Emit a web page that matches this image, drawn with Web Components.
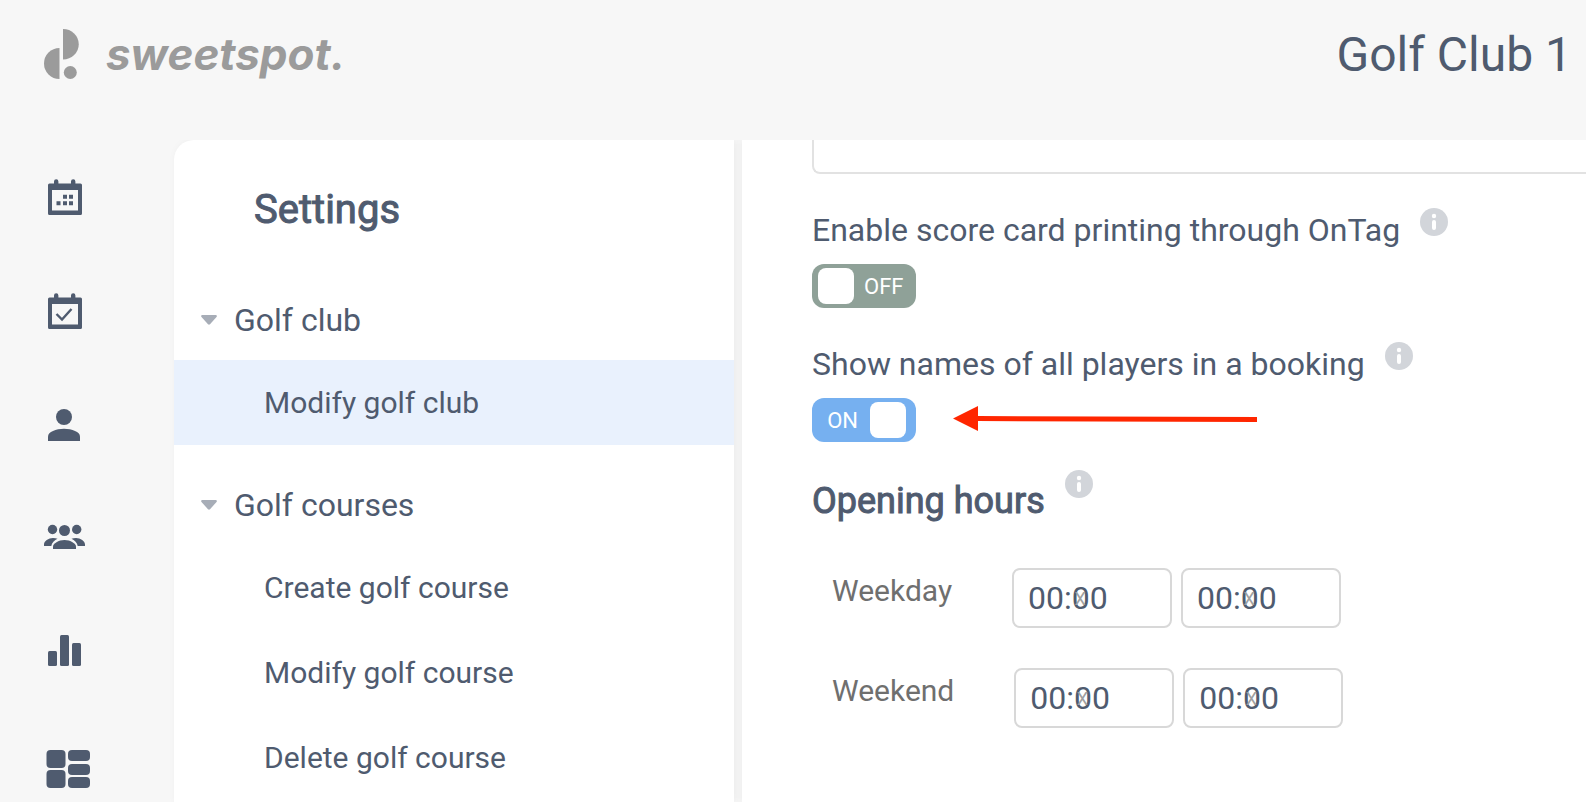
<!DOCTYPE html>
<html lang="en">
<head>
<meta charset="utf-8">
<meta name="viewport" content="width=device-width, initial-scale=1">
<title>Sweetspot - Settings</title>
<style>
    html, body { height: 100%; }
    body {
        margin: 0;
        overflow: hidden;
        background: #f7f7f7;
        color: #4f5b6f;
        font-family: Roboto, "Liberation Sans", sans-serif;
        font-size: 32px;
    }
</style>
</head>
<body>

<app-shell>
    <app-header slot="header" club="Golf Club 1"></app-header>
    <icon-rail slot="rail"></icon-rail>

    <settings-menu slot="menu" heading="Settings">
        <menu-group label="Golf club">
            <menu-item active>Modify golf club</menu-item>
        </menu-group>
        <menu-group label="Golf courses">
            <menu-item>Create golf course</menu-item>
            <menu-item>Modify golf course</menu-item>
            <menu-item>Delete golf course</menu-item>
        </menu-group>
    </settings-menu>

    <club-form>
        <toggle-field label="Enable score card printing through OnTag"></toggle-field>
        <toggle-field label="Show names of all players in a booking" checked>
            <pointer-arrow></pointer-arrow>
        </toggle-field>
        <opening-hours heading="Opening hours">
            <hours-row day="Weekday" from="00:00" to="00:00"></hours-row>
            <hours-row day="Weekend" from="00:00" to="00:00"></hours-row>
        </opening-hours>
    </club-form>
</app-shell>

<script>
    // shared helper, every element renders once into an open root
    function render(element, html) {
        element.attachShadow({mode: 'open'}).innerHTML = html;
    }

    class AppShell extends HTMLElement {
        connectedCallback() {
            render(this, `
                <style>
                    :host {
                        display: grid;
                        grid-template-columns: 174px 1fr;
                        grid-template-rows: 140px minmax(0, 1fr);
                        height: 100vh;
                    }
                    slot[name="header"] {
                        display: block;
                        grid-column: 1 / -1;
                        position: relative;
                        z-index: 1;
                        background: #f7f7f7;
                    }
                    .workspace {
                        display: grid;
                        grid-template-columns: 560px minmax(0, 1fr);
                        gap: 8px;
                        min-height: 0;
                    }
                </style>
                <slot name="header"></slot>
                <slot name="rail"></slot>
                <div class="workspace">
                    <slot name="menu"></slot>
                    <slot></slot>
                </div>
            `);
        }
    }

    class AppHeader extends HTMLElement {
        connectedCallback() {
            render(this, `
                <style>
                    :host {
                        display: flex;
                        justify-content: space-between;
                        align-items: flex-start;
                        padding: 27px 14px 0 44px;
                    }
                    a {
                        display: flex;
                        gap: 26px;
                        color: #9b9b9b;
                        text-decoration: none;
                        font: italic 700 44px/54px Inter, sans-serif;
                    }
                    .club { font-size: 48px; line-height: 56px; }
                </style>
                <a href="#">
                    <svg width="36" height="56" viewBox="0 0 36 56" fill="currentColor" aria-hidden="true">
                        <path d="M19 2a15.500 15 0 0 1 0 30.500z"/>
                        <path d="M15.500 21v31a15.500 15.500 0 0 1 0-31z"/>
                        <circle cx="26.300" cy="45.500" r="6.500"/>
                    </svg>
                    <span>sweetspot.</span>
                </a>
                <div class="club">${this.getAttribute('club')}</div>
            `);
        }
    }

    class IconRail extends HTMLElement {
        connectedCallback() {
            const calendar = `
                <path fill-rule="evenodd" d="M5.500 6.500h31a1.500 1.500 0 0 1 1.500 1.500v28.500a1.500 1.500 0 0 1-1.500 1.500h-31a1.500 1.500 0 0 1-1.500-1.500v-28.500a1.500 1.500 0 0 1 1.500-1.500zM8 13v20.500h26v-20.500z"/>
                <path d="M10 8v-3.500a2.200 2.200 0 0 1 4.400 0v3.500zM27 8v-3.500a2.200 2.200 0 0 1 4.400 0v3.500z"/>
            `;
            const icons = {
                'Calendar': calendar + `
                    <path d="M19 17.800h4v4h-4zM25 17.800h4v4h-4zM12.500 24.300h4v4h-4zM19 24.300h4v4h-4zM25 24.300h4v4h-4z"/>
                `,
                'Bookings': calendar + `
                    <path d="M12.500 23l5.500 5.500 9.500-10.500" fill="none" stroke="currentColor" stroke-width="2.400"/>
                `,
                'Player': `
                    <circle cx="20" cy="12" r="8"/>
                    <path d="M4 36v-4.500c0-4.500 8-7.700 16-7.700s16 3.200 16 7.700v4.500z"/>
                `,
                'Members': `
                    <circle cx="8.500" cy="10.500" r="4.700"/>
                    <circle cx="32.700" cy="10.500" r="4.700"/>
                    <circle cx="20.500" cy="11.500" r="5.500"/>
                    <path d="M9 30v-2.500c0-3 5.500-6.500 11.500-6.500s11.500 3.500 11.500 6.500v2.500z"/>
                    <path d="M0 27v-1.500c0-3.500 4.500-6.500 9-6.500 1.700 0 3.200.3 4.500.8-3 1.500-5.800 4-6.200 7.200z"/>
                    <path d="M41 27v-1.500c0-3.500-4.500-6.500-9-6.500-1.700 0-3.200.3-4.500.8 3 1.500 5.800 4 6.200 7.200z"/>
                `,
                'Statistics': `
                    <rect x="4" y="18" width="9" height="15" rx="1.500"/>
                    <rect x="16" y="2" width="9" height="31" rx="1.500"/>
                    <rect x="28" y="10" width="9" height="23" rx="1.500"/>
                `,
                'Overview': `
                    <rect x="2.500" y="3" width="19" height="18" rx="4"/>
                    <rect x="2.500" y="23" width="19" height="18" rx="4"/>
                    <rect x="24" y="3" width="22" height="11" rx="4"/>
                    <rect x="24" y="17" width="22" height="11" rx="4"/>
                    <rect x="24" y="30" width="22" height="11" rx="4"/>
                `
            };

            render(this, `
                <style>
                    :host { display: block; }
                    nav {
                        display: flex;
                        flex-direction: column;
                        align-items: flex-start;
                        gap: 70px;
                        padding: 37px 0 0 44px;
                    }
                    a, svg { display: block; color: inherit; }
                </style>
                <nav aria-label="Main">
                    ${Object.keys(icons).map(name => `
                        <a href="#" aria-label="${name}">
                            <svg width="48" height="44" viewBox="0 0 48 44" fill="currentColor">${icons[name]}</svg>
                        </a>
                    `).join('')}
                </nav>
            `);
        }
    }

    class SettingsMenu extends HTMLElement {
        connectedCallback() {
            render(this, `
                <style>
                    :host {
                        display: block;
                        background: white;
                        border-top-left-radius: 20px;
                        box-shadow: 2px 0 8px rgba(0, 0, 0, .05);
                    }
                    h1 {
                        margin: 0;
                        padding: 46px 80px;
                        font-size: 40px;
                        line-height: 48px;
                        font-weight: 400;
                        -webkit-text-stroke: 1px currentColor;
                    }
                    nav { display: flex; flex-direction: column; gap: 20px; }
                </style>
                <h1>${this.getAttribute('heading')}</h1>
                <nav aria-label="Settings"><slot></slot></nav>
            `);
        }
    }

    class MenuGroup extends HTMLElement {
        connectedCallback() {
            render(this, `
                <style>
                    :host { display: block; }
                    button {
                        display: flex;
                        align-items: center;
                        gap: 17px;
                        width: 100%;
                        height: 80px;
                        padding: 0 27px;
                        border: 0;
                        background: none;
                        color: inherit;
                        font: inherit;
                    }
                    svg { fill: #a7adb7; }
                </style>
                <button type="button" aria-expanded="true">
                    <svg width="16" height="10" viewBox="0 0 16 10" aria-hidden="true">
                        <path d="M1 0h14q1.500.5.500 2l-6.500 7.300q-1 .9-2 0l-6.500-7.300q-1-1.500.5-2z"/>
                    </svg>
                    ${this.getAttribute('label')}
                </button>
                <slot></slot>
            `);
        }
    }

    class MenuItem extends HTMLElement {
        connectedCallback() {
            render(this, `
                <style>
                    :host { display: block; }
                    :host([active]) { background: #e9f1fd; }
                    a {
                        display: block;
                        padding-left: 90px;
                        color: inherit;
                        font-size: 30px;
                        line-height: 85px;
                        text-decoration: none;
                    }
                </style>
                <a href="#"><slot></slot></a>
            `);
        }
    }

    class InfoHint extends HTMLElement {
        connectedCallback() {
            render(this, `
                <style>
                    :host { display: block; height: 28px; }
                    button { display: block; padding: 0; border: 0; background: none; }
                    svg { display: block; }
                </style>
                <button type="button" aria-label="More information">
                    <svg width="28" height="28" viewBox="0 0 28 28" aria-hidden="true">
                        <circle cx="14" cy="14" r="14" fill="#d2d5da"/>
                        <circle cx="14" cy="8" r="2.200" fill="white"/>
                        <rect x="12" y="12" width="4" height="10" rx="2" fill="white"/>
                    </svg>
                </button>
            `);
        }
    }

    class ClubForm extends HTMLElement {
        connectedCallback() {
            render(this, `
                <style>
                    :host {
                        display: block;
                        overflow: hidden;
                        background: white;
                        box-shadow: 0 0 8px rgba(0, 0, 0, .05);
                    }
                    form {
                        display: flex;
                        flex-direction: column;
                        gap: 34px;
                        padding-left: 70px;
                    }
                    textarea {
                        display: block;
                        box-sizing: border-box;
                        width: 100%;
                        height: 34px;
                        border: solid #e2e2e2;
                        border-width: 0 0 2px 2px;
                        border-bottom-left-radius: 8px;
                        resize: none;
                    }
                </style>
                <form>
                    <textarea aria-label="Description"></textarea>
                    <slot></slot>
                </form>
            `);
        }
    }

    class ToggleField extends HTMLElement {
        connectedCallback() {
            const checked = this.hasAttribute('checked');

            render(this, `
                <style>
                    :host { display: block; }
                    .caption { display: flex; gap: 20px; margin-bottom: 12px; }
                    .caption label { line-height: 44px; }
                    .control { display: flex; align-items: center; gap: 37px; }
                    .switch {
                        display: flex;
                        box-sizing: border-box;
                        align-items: center;
                        gap: 10px;
                        width: 104px;
                        height: 44px;
                        padding: 0 6px;
                        border-radius: 12px;
                        background: #8fa198;
                        color: white;
                        font-size: 22px;
                    }
                    .switch.on {
                        flex-direction: row-reverse;
                        gap: 12px;
                        padding: 0 10px;
                        background: #76b0f0;
                    }
                    input {
                        appearance: none;
                        flex: none;
                        width: 36px;
                        height: 36px;
                        margin: 0;
                        border-radius: 8px;
                        background: white;
                    }
                </style>
                <div class="caption">
                    <label for="toggle">${this.getAttribute('label')}</label>
                    <info-hint></info-hint>
                </div>
                <div class="control">
                    <div class="switch ${checked ? 'on' : ''}">
                        <input id="toggle" type="checkbox" role="switch" ${checked ? 'checked' : ''}>
                        <span>${checked ? 'ON' : 'OFF'}</span>
                    </div>
                    <slot></slot>
                </div>
            `);

            const input = this.shadowRoot.querySelector('input');
            input.addEventListener('change', () => {
                input.parentElement.classList.toggle('on', input.checked);
                input.nextElementSibling.textContent = input.checked ? 'ON' : 'OFF';
            });
        }
    }

    class PointerArrow extends HTMLElement {
        connectedCallback() {
            render(this, `
                <style>
                    :host, svg { display: block; }
                </style>
                <svg width="304" height="28" viewBox="0 0 304 28" fill="#ff2600" aria-hidden="true">
                    <path d="M0 12.500l25-12.500v10l279 1v5l-279-1v10z"/>
                </svg>
            `);
        }
    }

    class OpeningHours extends HTMLElement {
        connectedCallback() {
            render(this, `
                <style>
                    :host { display: block; margin-top: -6px; }
                    .caption { display: flex; gap: 20px; margin-bottom: 36px; }
                    h2 {
                        margin: 0;
                        font-size: 36px;
                        line-height: 62px;
                        font-weight: 400;
                        -webkit-text-stroke: 1px currentColor;
                    }
                    .rows {
                        display: flex;
                        flex-direction: column;
                        gap: 40px;
                        padding-left: 20px;
                    }
                </style>
                <div class="caption">
                    <h2>${this.getAttribute('heading')}</h2>
                    <info-hint></info-hint>
                </div>
                <div class="rows"><slot></slot></div>
            `);
        }
    }

    class HoursRow extends HTMLElement {
        connectedCallback() {
            const day = this.getAttribute('day');

            render(this, `
                <style>
                    :host { display: flex; }
                    label {
                        margin-right: 60px;
                        color: #6f6f6f;
                        font-size: 30px;
                        line-height: 46px;
                    }
                    .times { display: flex; gap: 9px; }
                </style>
                <label for="from">${day}</label>
                <div class="times">
                    <time-box>
                        <input id="from" type="text" value="${this.getAttribute('from')}">
                    </time-box>
                    <time-box>
                        <input type="text" aria-label="${day} closing" value="${this.getAttribute('to')}">
                    </time-box>
                </div>
            `);
        }
    }

    // the input is slotted, so that the label of the row can point at it
    class TimeBox extends HTMLElement {
        connectedCallback() {
            render(this, `
                <style>
                    :host { display: block; position: relative; }
                    ::slotted(input) {
                        display: block;
                        box-sizing: border-box;
                        width: 160px;
                        height: 60px;
                        padding: 0 14px;
                        border: 2px solid #d8d8d8;
                        border-radius: 8px;
                        background: white;
                        color: inherit;
                        font: inherit;
                    }
                    /* clear button lies over the value */
                    button {
                        position: absolute;
                        top: 21px;
                        left: 58px;
                        width: 20px;
                        height: 20px;
                        padding: 0;
                        border: 0;
                        background: none;
                        color: #a0a0a0;
                        font: 18px/20px Roboto, sans-serif;
                    }
                </style>
                <slot></slot>
                <button type="button" aria-label="Clear">X</button>
            `);

            this.shadowRoot.querySelector('button').addEventListener('click', () => {
                this.querySelector('input').value = '';
            });
        }
    }

    customElements.define('app-shell', AppShell);
    customElements.define('app-header', AppHeader);
    customElements.define('icon-rail', IconRail);
    customElements.define('settings-menu', SettingsMenu);
    customElements.define('menu-group', MenuGroup);
    customElements.define('menu-item', MenuItem);
    customElements.define('info-hint', InfoHint);
    customElements.define('club-form', ClubForm);
    customElements.define('toggle-field', ToggleField);
    customElements.define('pointer-arrow', PointerArrow);
    customElements.define('opening-hours', OpeningHours);
    customElements.define('hours-row', HoursRow);
    customElements.define('time-box', TimeBox);
</script>
</body>
</html>
